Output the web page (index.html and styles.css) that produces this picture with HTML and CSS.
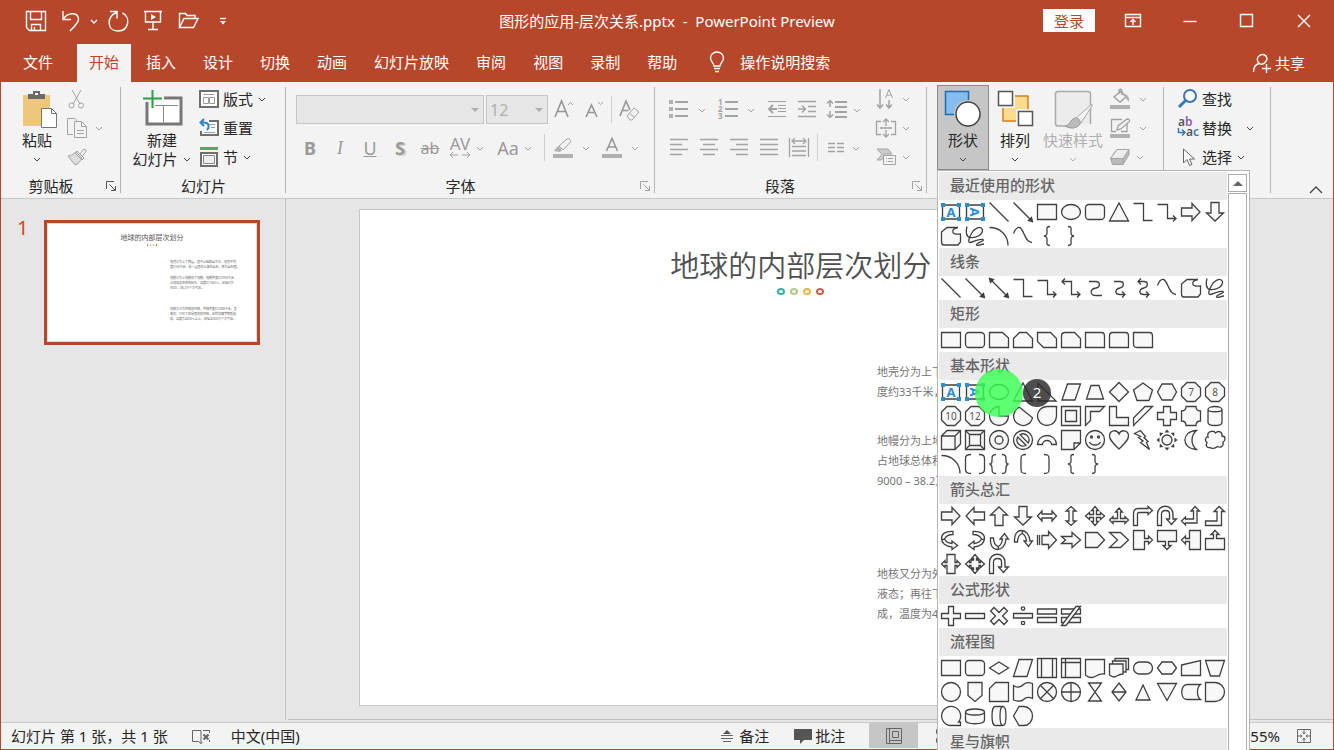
FILE: index.html
```html
<!DOCTYPE html>
<html lang="zh-CN">
<head>
<meta charset="utf-8">
<title>图形的应用-层次关系.pptx - PowerPoint Preview</title>
<link rel="stylesheet" href="styles.css">
</head>
<body>
<svg class="defs" aria-hidden="true">
  <symbol id="i-chev" viewBox="0 0 10 10"><path d="M2 4l3 3 3-3"/></symbol>
  <symbol id="i-launch" viewBox="0 0 12 12"><path d="M1.500 9V1.500H9M4.500 4.500l6 6M10.500 6v4.500H6"/></symbol>
</svg>
<div class="window">
  <header class="titlebar">
    <div class="quick">
      <button class="q" aria-label="保存"><svg width="22" height="22"><path d="M1.500 1.500h19v19h-16l-3-3zM5.500 1.500v8h11v-8M6.500 20.500v-6h9v6M9.500 17v3.500"/></svg></button>
      <button class="q" aria-label="撤消"><svg width="22" height="22"><path d="M3 1v8.500h8M3.500 9c4-7 14-7 15-.5.5 4-4 8-8.500 12.500"/></svg></button>
      <button class="q narrow" aria-label="撤消选项"><svg width="10" height="10"><use href="#i-chev"/></svg></button>
      <button class="q" aria-label="重复"><svg width="22" height="22"><path d="M3 1.500h7v7M9.500 2.500C-1 7 0 21 11 21c11 0 13-14 4.500-18"/></svg></button>
      <button class="q" aria-label="放映"><svg width="22" height="22"><path d="M2 1.500h18M3.500 1.500v10.500h15V1.500M11 12v7M6 19.500h10"/><path class="solid" d="M9 4l5 3-5 3z"/></svg></button>
      <button class="q" aria-label="打开"><svg width="22" height="22"><path d="M2.500 17.500v-14h6l1.500 2h8v3M2.500 17.500l4.500-9h14l-4.500 9z"/></svg></button>
      <button class="q" aria-label="自定义"><svg width="10" height="10"><path d="M2 2.500h6"/><path class="solid" d="M2 5h6L5 8.500z"/></svg></button>
    </div>
    <h1 class="doc">图形的应用-层次关系.pptx&nbsp; -&nbsp; PowerPoint Preview</h1>
    <div class="winctl">
      <button class="login">登录</button>
      <button class="w" aria-label="功能区显示选项"><svg width="18" height="16"><path d="M1.500 1.500h15v12h-15zM1.500 4.500h15M9 12V6.500M6.500 9L9 6.500 11.500 9"/></svg></button>
      <button class="w" aria-label="最小化"><svg width="16" height="16"><path d="M1.500 8.500h13"/></svg></button>
      <button class="w" aria-label="最大化"><svg width="16" height="16"><path d="M1.500 1.500h12v12h-12z"/></svg></button>
      <button class="w" aria-label="关闭"><svg width="16" height="16"><path d="M2 2l12 12M14 2L2 14"/></svg></button>
    </div>
  </header>

  <nav class="tabs">
    <button class="tab file">文件</button>
    <button class="tab active">开始</button>
    <button class="tab">插入</button>
    <button class="tab">设计</button>
    <button class="tab">切换</button>
    <button class="tab">动画</button>
    <button class="tab">幻灯片放映</button>
    <button class="tab">审阅</button>
    <button class="tab">视图</button>
    <button class="tab">录制</button>
    <button class="tab">帮助</button>
    <button class="tell"><svg width="16" height="22"><path d="M5 15c0-3-3.500-4-3.500-8a6.500 6 0 0 1 13 0c0 4-3.500 5-3.500 8zM5 17.500h6M6 20.500h4"/></svg>操作说明搜索</button>
    <button class="share"><svg width="20" height="20"><path d="M1.500 19c0-6 3-8 6-8.500M13 9.500c-2 2-4 2-5.500 1-3-2-3-6 0-8s7-1 7.500 3c0 2-1 3-2 4zM10 15.500h9M14.500 11v9"/></svg>共享</button>
  </nav>

  <section class="ribbon" aria-label="开始">
    <div class="group g-clip">
      <div class="tools">
        <button class="big paste"><svg width="40" height="40"><path d="M3 6h27v31H3z" fill="#eec77c"/><path d="M8 5h5V2h7v3h5v5H8z" fill="#6b6b6b"/><path d="M15 4h3v2h-3z" fill="#f3f3f3"/><path d="M21.500 19.500h10l5 5v14h-15z" fill="#fff" stroke="#777"/><path d="M31.500 19.500v5h5" fill="none" stroke="#777"/></svg><span>粘贴</span><svg class="chev" width="10" height="10"><use href="#i-chev"/></svg></button>
        <div class="stack dim">
          <button class="row tight" aria-label="剪切"><span class="ic"><svg width="20" height="22"><path d="M5 2l8 14M14 2L6 16M7 17.500a2.500 2.500 0 1 1-5 0 2.500 2.500 0 0 1 5 0zM16.500 17.500a2.500 2.500 0 1 1-5 0 2.500 2.500 0 0 1 5 0z"/></svg></span></button>
          <button class="row tight" aria-label="复制"><span class="ic"><svg width="22" height="22"><path d="M7 17.500H1.500v-16H9l2.500 3M8.500 4.500h7l5 5v11h-12zM15.500 4.500v5h5M11 13.500h7M11 16.500h7"/></svg></span><svg class="chev" width="10" height="10"><use href="#i-chev"/></svg></button>
          <button class="row tight" aria-label="格式刷"><span class="ic"><svg width="22" height="20"><path fill="#ddd" d="M2 9c4 0 6-3 8-4l6 6c-2 4-4 6-7 7z"/><path d="M9 6l7 7M11 4l7 7-2 2-7-7zM14 7l4-5 2.500 1.500-4 5.500"/></svg></span></button>
        </div>
      </div>
      <div class="caption"><span>剪贴板</span><button class="launch" aria-label="剪贴板设置"><svg width="12" height="12"><use href="#i-launch"/></svg></button></div>
    </div>

    <div class="group g-slides">
      <div class="tools">
        <button class="big newslide"><svg width="40" height="40"><path d="M5 9h34v26H5z" fill="#fff" stroke="#777" stroke-width="3"/><path d="M8 16.500h28M21.500 16.500V33" stroke="#888" fill="none"/><path d="M0 5h22v8H13v6H7V13H0z" fill="#f3f3f3"/><path d="M1 9.500h19M10.500 1v18" stroke="#2f9e4b" stroke-width="2" fill="none"/></svg><span>新建</span><span>幻灯片<svg class="chev" width="10" height="10"><use href="#i-chev"/></svg></span></button>
        <div class="stack">
          <button class="row"><span class="ic"><svg width="20" height="18"><path d="M1 1h18v16H1z" fill="#fff" stroke="#6e6e6e" stroke-width="2"/><path d="M4.500 4.500h11M4.500 7.500h5v6h-5zM10.500 7.500h5v6h-5z" stroke="#999" fill="none"/></svg></span>版式<svg class="chev" width="10" height="10"><use href="#i-chev"/></svg></button>
          <button class="row"><span class="ic"><svg width="20" height="20"><path d="M2 3h17v14H2z" fill="#fff" stroke="#6e6e6e" stroke-width="2"/><path d="M10 6.500h6M12 9.500h4M5 14.500h11" stroke="#999" fill="none"/><path d="M0 0h10v5l-1 8H0z" fill="#f3f3f3"/><path d="M5 1L1.500 4.500 5 8M1.500 4.500h4C10 5 11 9 8 12" stroke="#2787c9" stroke-width="2" fill="none"/></svg></span>重置</button>
          <button class="row"><span class="ic"><svg width="20" height="22"><path d="M1 1h18v3H1z" fill="#4aae63"/><path d="M2 7h16v13H2z" fill="#fff" stroke="#6e6e6e" stroke-width="2"/><path d="M4.500 9.500h11v8h-11z" fill="#eee" stroke="#888"/></svg></span>节<svg class="chev" width="10" height="10"><use href="#i-chev"/></svg></button>
        </div>
      </div>
      <div class="caption"><span>幻灯片</span></div>
    </div>

    <div class="group g-font">
      <div class="tools lines dim">
        <div class="line">
          <button class="combo name" aria-label="字体"><span></span><svg width="8" height="8"><path class="solid" d="M0 2h8L4 6z"/></svg></button>
          <button class="combo size" aria-label="字号"><span>12</span><svg width="8" height="8"><path class="solid" d="M0 2h8L4 6z"/></svg></button>
          <button class="t first" aria-label="增大字号"><svg width="22" height="22"><path class="letter" d="M2 18L8.500 2 15 18M4.500 12.500h8"/><path d="M15 6l2.500-2.500L20 6"/></svg></button>
          <button class="t" aria-label="减小字号"><svg width="22" height="22"><path class="letter" d="M3 18L8.500 6 14 18M5 13.500h7"/><path d="M15 3l2.500 2.500L20 3"/></svg></button>
          <i class="sep near"></i>
          <button class="t" aria-label="清除格式"><svg width="22" height="22"><path class="letter" d="M2 17L8 2l4 9M4.500 11.500h6"/><path d="M9 17l7-8 5 4-7 8h-2zM11 14l5 4"/></svg></button>
        </div>
        <div class="line">
          <button class="t"><b>B</b></button>
          <button class="t"><em>I</em></button>
          <button class="t"><u>U</u></button>
          <button class="t shadow"><b>S</b></button>
          <button class="t strike"><s>ab</s></button>
          <button class="t av"><span>AV</span><svg width="22" height="8"><path d="M4 1L1 4l3 3M1 4h8M18 1l3 3-3 3M21 4h-8"/></svg></button>
          <button class="d" aria-label="字符间距"><svg width="10" height="10"><use href="#i-chev"/></svg></button>
          <button class="t">Aa</button>
          <button class="d" aria-label="更改大小写"><svg width="10" height="10"><use href="#i-chev"/></svg></button>
          <i class="sep"></i>
          <button class="t" aria-label="突出显示"><svg width="22" height="22"><path class="solid" d="M1 17h20v4H1zM2 14l4-5 4 4-2 2z"/><path d="M7 9l8-7c2-1 5 1 3 3.500L11 13z"/></svg></button>
          <button class="d wide" aria-label="突出显示颜色"><svg width="10" height="10"><use href="#i-chev"/></svg></button>
          <button class="t" aria-label="字体颜色"><svg width="22" height="22"><path class="solid" d="M1 17h20v4H1z"/><path class="letter" d="M5.500 14L11 1.500 16.500 14M7.500 10h7"/></svg></button>
          <button class="d wide" aria-label="字体颜色选项"><svg width="10" height="10"><use href="#i-chev"/></svg></button>
        </div>
      </div>
      <div class="caption"><span>字体</span><button class="launch dim" aria-label="字体设置"><svg width="12" height="12"><use href="#i-launch"/></svg></button></div>
    </div>

    <div class="group g-para">
      <div class="tools dim">
        <div class="lines">
          <div class="line">
            <button class="t" aria-label="项目符号"><svg width="22" height="22"><path class="solid" d="M1 1h4v4H1zM1 8h4v4H1zM1 15h4v4H1z"/><path d="M7 3h13M7 10h13M7 17h13" stroke-width="2"/></svg></button>
            <button class="d wide" aria-label="项目符号选项"><svg width="10" height="10"><use href="#i-chev"/></svg></button>
            <button class="t" aria-label="编号"><svg width="22" height="22"><path d="M8 3h13M8 10h13M8 17h13" stroke-width="2"/><g class="digits"><text x="1" y="6">1</text><text x="1" y="13">2</text><text x="1" y="20">3</text></g></svg></button>
            <button class="d wide" aria-label="编号选项"><svg width="10" height="10"><use href="#i-chev"/></svg></button>
            <button class="t" aria-label="减少缩进"><svg width="22" height="22"><path d="M2 2.500h18M12 6.500h8M12 9.500h8M12 12.500h8M2 17.500h18" /><path d="M11 10H3M7 6l-4 4 4 4" stroke-width="2"/></svg></button>
            <button class="t" aria-label="增加缩进"><svg width="22" height="22"><path d="M2 2.500h18M12 7.500h8M12 12.500h8M2 17.500h18M2 10h7M6 6.500L9.500 10 6 13.500" stroke-width="1.500"/></svg></button>
            <button class="t" aria-label="行距"><svg width="22" height="22"><path d="M9 3h12M9 8h12M9 13h12M9 18h12" stroke-width="2"/><path d="M4 2v6M1 4.500L4 1.500l3 3M4 12v6M1 15.500l3 3 3-3" stroke-width="1.500"/></svg></button>
            <button class="d" aria-label="行距选项"><svg width="10" height="10"><use href="#i-chev"/></svg></button>
          </div>
          <div class="line">
            <button class="t" aria-label="左对齐"><svg width="22" height="22"><path d="M2 2.500h18M2 7.500h12M2 12.500h18M2 17.500h12" stroke-width="1.500"/></svg></button>
            <button class="t" aria-label="居中"><svg width="22" height="22"><path d="M2 2.500h18M5 7.500h12M2 12.500h18M5 17.500h12" stroke-width="1.500"/></svg></button>
            <button class="t" aria-label="右对齐"><svg width="22" height="22"><path d="M2 2.500h18M8 7.500h12M2 12.500h18M8 17.500h12" stroke-width="1.500"/></svg></button>
            <button class="t" aria-label="两端对齐"><svg width="22" height="22"><path d="M2 2.500h18M2 7.500h18M2 12.500h18M2 17.500h18" stroke-width="1.500"/></svg></button>
            <button class="t" aria-label="分散对齐"><svg width="22" height="22"><path d="M1.500 1v19M20.500 1v19M4 9.500h14M4 14h14M4 18.500h14M4 4h14M7 1L4 4l3 3M15 1l3 3-3 3" stroke-width="1.300"/></svg></button>
            <i class="sep"></i>
            <button class="t" aria-label="分栏"><svg width="22" height="22"><path d="M3 6.500h7M12 6.500h7M3 10.500h7M12 10.500h7M3 14.500h7M12 14.500h7" stroke-width="1.500"/></svg></button>
            <button class="d" aria-label="分栏选项"><svg width="10" height="10"><use href="#i-chev"/></svg></button>
          </div>
        </div>
        <div class="stack">
          <button class="row slim" aria-label="文字方向"><span class="ic"><svg width="22" height="22"><path d="M5 1v19M2 16.500l3 3.500 3-3.500M14 12v8M11 16.500l3 3.500 3-3.500" stroke-width="1.500"/><path d="M10.500 10L14 1.500 17.500 10M12 7h4"/></svg></span><svg class="chev" width="10" height="10"><use href="#i-chev"/></svg></button>
          <button class="row slim" aria-label="对齐文本"><span class="ic"><svg width="22" height="22"><path d="M6 4.500H1.500v13H6M16 4.500h4.500v13H16M5 11h12M11 2v7M8 5l3-3 3 3M11 13v7M8 17l3 3 3-3" stroke-width="1.300"/></svg></span><svg class="chev" width="10" height="10"><use href="#i-chev"/></svg></button>
          <button class="row slim" aria-label="转换为 SmartArt"><span class="ic"><svg width="22" height="22"><path d="M2 3h11l4 5H9v4l-3 2H2l5-5.500z" fill="#ccc"/><path d="M8.500 9.500h12v9h-12zM11 12.500h1M13 12.500h5M11 15.500h1M13 15.500h5" fill="#f3f3f3"/></svg></span><svg class="chev" width="10" height="10"><use href="#i-chev"/></svg></button>
        </div>
      </div>
      <div class="caption"><span>段落</span><button class="launch dim" aria-label="段落设置"><svg width="12" height="12"><use href="#i-launch"/></svg></button></div>
    </div>

    <div class="group g-draw" aria-label="绘图">
      <div class="tools">
        <div class="anchor">
          <button class="big open" aria-expanded="true"><svg width="40" height="40"><path d="M2.500 2.500h23v23h-23z" fill="#85bdee" stroke="#1a6fb8" stroke-width="1.500"/><circle cx="25" cy="25" r="14" fill="#c6c6c6"/><circle cx="25" cy="25" r="12" fill="#fff" stroke="#444" stroke-width="1.500"/></svg><span>形状</span><svg class="chev" width="10" height="10"><use href="#i-chev"/></svg></button>
          <div class="menu">
            <div class="gallery">
              <h2>最近使用的形状</h2>
              <div class="grid" data-shapes="textbox vtextbox line arrow rect ellipse round tri elbow elbowArrow right down freeform scribble arc curve lbrace rbrace"></div>
              <h2>线条</h2>
              <div class="grid" data-shapes="line arrow arrow2 elbow elbowArrow elbowArrow2 curved curvedArrow curvedArrow2 curve freeform scribble"></div>
              <h2>矩形</h2>
              <div class="grid" data-shapes="rect round snip1 snip2 snipDiag snipRound round1 round2 roundDiag"></div>
              <h2>基本形状</h2>
              <div class="grid" data-shapes="textbox vtextbox ellipse tri rtri para trap diamond pentagon hexagon n7 n8 n10 n12 pie chord tear frame halfFrame corner stripe cross plaque can cube bevel donut no blockArc folded smiley heart bolt sun moon cloud arc bracketPair bracePair lbracket rbracket lbrace rbrace"></div>
              <h2>箭头总汇</h2>
              <div class="grid" data-shapes="right left up down leftRight upDown quad triArrow bent uturn leftUp bentUp curveRight curveLeft curveUp curveDown striped notched home chevron callRight callDown callLeft callUp callLeftRight callQuad circular"></div>
              <h2>公式形状</h2>
              <div class="grid" data-shapes="mathPlus minus times divide equal notEqual"></div>
              <h2>流程图</h2>
              <div class="grid" data-shapes="rect round decision data predefined internal document documents terminator prep manualInput manualOp circle offPage card tape junction or collate sort extract merge stored delay sequential disk direct display"></div>
              <h2>星与旗帜</h2>
            </div>
            <div class="scroll"><button aria-label="向上滚动"><svg width="10" height="8"><path d="M0 7h10L5 2z"/></svg></button><div class="thumb"></div></div>
            <div class="tap"></div>
            <div class="step">2</div>
          </div>
        </div>
        <button class="big arrange"><svg width="40" height="40"><path d="M7 7h25v25H7z" fill="#f9dc8f" stroke="#e07b1a" stroke-width="1.500"/><path d="M0 0h19v19H0zM20 20h20v20H20z" fill="#f3f3f3"/><path d="M2.500 2.500h14v14h-14zM22.500 22.500h14v14h-14z" fill="#fff" stroke="#555" stroke-width="1.500"/></svg><span>排列</span><svg class="chev" width="10" height="10"><use href="#i-chev"/></svg></button>
        <button class="big faded"><svg width="40" height="40"><path d="M24 37H5q-2.500 0-2.500-2.500V5q0-2.500 2.500-2.500h30q2.500 0 2.500 2.500v30" fill="#ececec" stroke="#aaa" stroke-width="1.500"/><path d="M39 15L23 29l5 5 11-17z" fill="#f3f3f3" stroke="#aaa"/><path d="M12 37c5 0 5-7 10-8 4 0 6 3 5 6-3 5-10 5-15 2z" fill="#bbb" stroke="#999"/></svg><span>快速样式</span><svg class="chev" width="10" height="10"><use href="#i-chev"/></svg></button>
        <div class="stack dim">
          <button class="row wide" aria-label="形状填充"><span class="ic"><svg width="22" height="22"><path class="solid" d="M1 17h20v4H1z"/><path d="M5 9l7-6 5 6-6 5zM10 6V2q2-2 3 1v4" stroke-width="1.500"/><path class="solid" d="M16 6q5 2 4 8l-4-5z"/></svg></span><svg class="chev" width="10" height="10"><use href="#i-chev"/></svg></button>
          <button class="row wide" aria-label="形状轮廓"><span class="ic"><svg width="22" height="22"><path class="solid" d="M1 17h20v4H1z"/><path d="M13 2.500H2.500v12H7M18 6v8.500h-6M8 13l1-4 9-7q3 0 2.500 2.500L12 12z" stroke-width="1.300"/></svg></span><svg class="chev" width="10" height="10"><use href="#i-chev"/></svg></button>
          <button class="row" aria-label="形状效果"><span class="ic"><svg width="22" height="22"><path fill="#bbb" d="M1.500 12.500L8 3.500h12v5L14 18.500H3.500z"/><path fill="#eee" d="M1.500 12.500L8 3.500h12L14 12.500z"/><path d="M14 12.500v6"/></svg></span><svg class="chev" width="10" height="10"><use href="#i-chev"/></svg></button>
        </div>
      </div>
    </div>

    <div class="group g-edit" aria-label="编辑">
      <div class="tools">
        <div class="stack">
          <button class="row"><span class="ic"><svg width="22" height="20"><circle cx="13" cy="7" r="6" fill="#fff" stroke="#3a76b5" stroke-width="2"/><path d="M8.500 11.500L2 18" stroke="#3a76b5" stroke-width="3" fill="none"/></svg></span>查找</button>
          <button class="row"><span class="ic"><svg class="replace" width="22" height="22"><text x="1" y="9">a<tspan fill="#8e5ba8">b</tspan></text><text x="9" y="19">a<tspan fill="#3a76b5">c</tspan></text><path d="M1.500 11v4.500h6M5 12.500l3 3-3 3" fill="none" stroke="#3a76b5" stroke-width="1.500"/></svg></span>替换<svg class="chev far" width="10" height="10"><use href="#i-chev"/></svg></button>
          <button class="row"><span class="ic"><svg width="20" height="20"><path d="M5.500 2v14l3.500-3.500 2.500 6 2.500-1-2.500-5.500h5z" fill="#fff" stroke="#666"/></svg></span>选择<svg class="chev" width="10" height="10"><use href="#i-chev"/></svg></button>
        </div>
      </div>
    </div>
    <button class="collapse" aria-label="折叠功能区"><svg width="16" height="10"><path d="M2 8l6-6 6 6"/></svg></button>
  </section>

  <main class="work">
    <aside class="pane">
      <span class="num">1</span>
      <div class="mini">
        <p class="mini-title">地球的内部层次划分</p>
        <div class="mini-dots"><i></i><i></i><i></i><i></i></div>
        <div class="mini-text">
          <p>地壳分为上下两层，其中以硅酸岩为主，地壳平均<br>度约33千米，是一层固态土壤和岩石，称为岩石圈。</p>
          <p>地幔分为上地幔和下地幔，地幔厚度约2900千米，<br>占地球总体积的83%，温度约1000℃，压强约为<br>9000 – 38.2万个大气压。</p>
          <p>地核又分为外核和内核，外核厚度约2080千米，呈<br>液态；再往下就是固态的内核，由铁和镍等物质组<br>成，温度为4000℃以上，压强达300万个大气压。</p>
        </div>
      </div>
    </aside>
    <div class="stage">
      <article class="slide">
        <h2 class="slide-title">地球的内部层次划分</h2>
        <div class="dots"><i></i><i></i><i></i><i></i></div>
        <div class="copy">
          <p>地壳分为上下两层，其中以硅酸岩为主，地壳平均<br>度约33千米，是一层固态土壤和岩石，称为岩石圈。</p>
          <p>地幔分为上地幔和下地幔，地幔厚度约2900千米，<br>占地球总体积的83%，温度约1000℃，压强约为<br>9000 – 38.2万个大气压。</p>
          <p>地核又分为外核和内核，外核厚度约2080千米，呈<br>液态；再往下就是固态的内核，由铁和镍等物质组<br>成，温度为4000℃以上，压强达300万个大气压。</p>
        </div>
      </article>
    </div>
  </main>

  <footer class="status">
    <span>幻灯片 第 1 张，共 1 张</span>
    <button aria-label="拼写检查"><svg width="20" height="18"><path d="M10 3.500H1.500v11h6l2.500 2 1.500-1M10 3.500v13M12 3.500h6.500V6M18.500 13v2"/><path d="M12.500 7.500l5 5M17.500 7.500l-5 5" stroke-width="2"/></svg></button>
    <button class="lang">中文(中国)</button>
    <div class="right">
      <button class="notes"><svg width="14" height="14"><path d="M1 6.500h12M1 9.500h12M3 12.500h8"/><path d="M3 5l4-4 4 4z" fill="#555" stroke="none"/></svg>备注</button>
      <button class="comments"><svg width="20" height="18"><path d="M1 2h18v11h-8l-4 4v-4H1z" fill="#555" stroke="none"/></svg>批注</button>
      <button class="view on" aria-label="普通视图"><svg width="18" height="18"><path d="M1.500 1.500h15v15h-15zM4.500 1.500v15M7.500 4.500h6v6h-6zM4.500 13.500h12"/></svg></button>
      <button class="view" aria-label="幻灯片浏览"><svg width="18" height="18"><path d="M2.500 2.500h5v4h-5zM10.500 2.500h5v4h-5zM2.500 11.500h5v4h-5zM10.500 11.500h5v4h-5z"/></svg></button>
      <input class="zoom" type="range" value="30" aria-label="缩放">
      <span>55%</span>
      <button aria-label="适应窗口"><svg width="16" height="16"><path d="M1.500 1.500h13v13h-13zM8 2v4M8 10v4M2 8h4M10 8h4M6.500 4.500L8 6l1.500-1.500M6.500 11.500L8 10l1.500 1.500M4.500 6.500L6 8 4.500 9.500M11.500 6.500L10 8l1.500 1.500"/></svg></button>
    </div>
  </footer>
</div>
<script src="shapes.js"></script>
</body>
</html>
```

FILE: styles.css
```css
* { box-sizing: border-box; }
body {
  margin: 0;
  overflow: hidden;
  font: 15px/20px "Noto Sans", "Noto Sans CJK SC", sans-serif;
  color: #262626;
}
button {
  font: inherit;
  color: inherit;
  background: none;
  border: 0;
  padding: 0;
  display: flex;
  align-items: center;
  justify-content: center;
}
h1, h2, p { margin: 0; font-weight: 400; }
svg { flex: none; overflow: visible; }
.defs { position: absolute; width: 0; height: 0; }

.window {
  display: flex;
  flex-direction: column;
  height: 100vh;
  border: 1px solid #b7472a;
  border-top: 0;
  background: #e6e6e6;
}

/* title bar */
.titlebar {
  display: grid;
  grid-template-columns: 1fr auto 1fr;
  align-items: center;
  height: 44px;
  padding-bottom: 2px;
  background: #b7472a;
  color: #fff;
}
.titlebar svg, .tabs svg { fill: none; stroke: #fff; stroke-width: 1.400; }
.titlebar .solid { fill: #fff; stroke: none; }
.quick { display: flex; align-items: center; padding: 0 0 1px 17px; }
.q { width: 35px; height: 36px; }
.q.narrow { width: 12px; }
.doc { font-size: 15px; line-height: 20px; }
.winctl { display: flex; align-items: center; justify-content: flex-end; padding: 0 1px 1px 0; }
.login {
  width: 52px;
  height: 23px;
  background: #fff;
  color: #b7472a;
}
.w { width: 57px; height: 40px; }
.login + .w { margin-left: 9px; }

/* tabs */
.tabs {
  display: flex;
  gap: 3px;
  height: 38px;
  padding-left: 10px;
  background: #b7472a;
  color: #fff;
}
.tab { padding: 0 12px 2px; }
.tab.file { margin-right: 9px; }
.tab.active { background: #f3f3f3; color: #b7472a; }
.tell { gap: 15px; margin-left: 17px; padding-bottom: 2px; }
.share { gap: 3px; margin-left: auto; padding-right: 28px; }

/* ribbon */
.ribbon {
  display: flex;
  height: 117px;
  padding-top: 3px;
  background: #f3f3f3;
  border-bottom: 1px solid #c8c8c8;
}
.ribbon svg { fill: none; stroke: none; }
.group {
  display: flex;
  flex-direction: column;
  flex: none;
  position: relative;
  height: 110px;
}
.group::after {
  content: "";
  position: absolute;
  right: 0;
  top: 2px;
  bottom: 2px;
  width: 1px;
  background: #b4b4b4;
}
.g-clip { width: 120px; }
.g-slides { width: 165px; }
.g-font { width: 369px; }
.g-para { width: 272px; }
.g-draw { width: 237px; }
.g-edit { width: 107px; }
.tools { display: flex; height: 88px; }
.caption { display: flex; justify-content: center; position: relative; padding-top: 4px; height: 22px; line-height: 20px; }
.caption span { line-height: 18px; }
.g-clip .caption { padding-right: 20px; }
.g-para .caption { padding-right: 22px; }
.g-font .caption { padding-right: 20px; }
.launch { position: absolute; right: 4px; top: 7px; }
.launch svg { stroke: #555; }
.launch.dim svg { stroke: #aaa; }

.big {
  flex-direction: column;
  justify-content: flex-start;
  width: 52px;
  height: 85px;
  padding-top: 3px;
  border: 1px solid transparent;
}
.big > span { padding-top: 1px; }
.big .chev { margin-top: 4px; }
.big span { display: flex; align-items: center; white-space: nowrap; }
.ribbon .chev { stroke: #444; }
.ribbon .chev path { fill: none; }
.big.open { background: #c6c6c6; border-color: #8a8a8a; }
.big.faded { width: 64px; color: #b0b0b0; }
.ribbon .faded .chev { stroke: #b0b0b0; }
.paste { margin-left: 11px; width: 50px; }
.paste > svg:first-child { margin-left: 5px; }
.newslide { margin-left: 8px; width: 66px; }
.newslide span + span { padding: 0; line-height: 18px; }
.big.newslide .chev { margin: 0 0 0 4px; }

.stack { display: flex; flex-direction: column; }
.row { height: 29px; justify-content: flex-start; padding-bottom: 2px; }
.ic { display: flex; justify-content: center; width: 30px; }
.row .chev { margin-left: 4px; }
.g-slides .ic { width: 28px; justify-content: flex-start; padding-left: 4px; }
.g-edit .ic { width: 28px; }
.g-edit .stack { padding-left: 10px; }
.row .chev.far { margin-left: 13px; }
.row.slim .chev { margin-left: 0; }
.row.wide .chev { margin-left: 3px; }
.row.tight .chev { margin-left: 2px; }
.dim .row:not(.wide):not(.slim):not(.tight) .chev { margin-left: 0; }

.dim { color: #9a9a9a; }
.ribbon .dim svg { stroke: #a3a3a3; }
.ribbon .dim .solid { fill: #b0b0b0; stroke: none; }
.ribbon .dim .letter { stroke: #979797; stroke-width: 1.600; }
.lines { display: flex; flex-direction: column; padding-top: 5px; }
.g-font .lines { padding-left: 9px; }
.g-para .tools { padding-left: 9px; }
.g-para .lines { width: 207px; }
.g-draw .tools { padding-left: 10px; }
.line { display: flex; align-items: center; height: 39px; }
.line + .line { height: 37px; }
.combo {
  justify-content: space-between;
  height: 29px;
  padding: 0 4px 0 3px;
  background: #e6e6e6;
  border: 1px solid #c6c6c6;
  color: #b0b0b0;
}
.combo.name { width: 188px; margin: 0 2px 0 1px; }
.combo.size { width: 62px; }
.combo.size span { font-size: 16px; }
.t { width: 30px; height: 30px; font-size: 18px; }
.t.first { margin-left: 1px; }
.line em { font-family: "Liberation Serif", serif; }
.shadow b { text-shadow: 2px 1px 1px #ccc; }
.strike { font-size: 16px; }
.av { flex-direction: column; line-height: 15px; font-size: 17px; }
.d { width: 10px; height: 30px; margin-right: 8px; }
.d.wide { width: 16px; margin-right: 3px; }
.sep { width: 1px; height: 27px; margin: 0 3px; background: #cfcfcf; }
.sep.near { margin: 0 2px; }
.digits { font-size: 8px; font-weight: 700; fill: #a3a3a3; stroke: none; }
.replace { font-size: 12px; font-weight: 600; }
.ribbon .replace { fill: #555; }
.collapse { margin: auto 9px 3px auto; }
.collapse svg { stroke: #444; stroke-width: 1.300; }
.arrange > svg:first-child { margin-left: 2px; }

/* shape menu */
.anchor { position: relative; }
.menu {
  position: absolute;
  z-index: 2;
  left: 0;
  top: 85px;
  display: flex;
  width: 313px;
  height: calc(100vh - 170px);
  padding: 1px 2px 0 1px;
  overflow: hidden;
  background: #fff;
  border: 1px solid #b4b4b4;
  border-bottom: 0;
}
.gallery { width: 288px; }
.gallery h2 {
  height: 28px;
  padding-left: 11px;
  background: #eaeaea;
  color: #666;
  font-size: 15px;
  line-height: 27px;
  font-weight: 500;
}
.grid { display: grid; grid-template-columns: repeat(12, 24px); grid-auto-rows: 24px; }
.ribbon .grid svg { fill: #f8f8f8; stroke: #404040; stroke-width: 1.300; }
.grid .open-path { fill: none; }
.grid .tip { fill: #404040; }
.grid .ray { fill: #404040; stroke: none; }
.grid .blue { fill: #2b8fd3; stroke: none; }
.grid text { stroke: none; fill: #555; font-size: 10px; line-height: 12px; text-anchor: middle; }
.grid text.blue { fill: #2b8fd3; font-size: 13px; font-weight: 700; }
.scroll {
  display: flex;
  flex-direction: column;
  gap: 1px;
  width: 19px;
  margin: 2px 0 0 1px;
}
.scroll button { height: 18px; border: 1px solid #ababab; }
.ribbon .scroll svg { fill: #666; }
.thumb { flex: 1; border: 1px solid #ababab; border-bottom: 0; }
.tap, .step { position: absolute; border-radius: 50%; pointer-events: none; }
.tap { left: 37px; top: 198px; width: 48px; height: 48px; background: rgba(55, 255, 80, 0.800); }
.step {
  left: 85px;
  top: 208px;
  width: 28px;
  height: 28px;
  background: rgba(40, 40, 40, 0.820);
  color: #fff;
  font-size: 15px;
  line-height: 27px;
  text-align: center;
}

/* work area */
.work { display: flex; flex: 1; min-height: 0; padding-bottom: 2px; }
.pane {
  display: flex;
  align-items: flex-start;
  width: 285px;
  padding: 21px 0 0 16px;
  border-right: 1px solid #c0c0c0;
}
.num { width: 27px; color: #d24726; font-size: 20px; line-height: 16px; }
.mini {
  width: 216px;
  height: 125px;
  padding-top: 11px;
  border: 3px solid #b7472a;
  background: #fff;
  color: #555;
  outline: 1px solid #ddd;
  outline-offset: -4px;
}
.mini-title { font-size: 7px; line-height: 7px; text-align: center; }
.mini-dots { display: flex; justify-content: center; gap: 2px; padding-top: 3px; }
.mini-dots i { width: 1px; height: 2px; background: #f0c070; }
.mini-dots i:first-child { background: #3cb5a0; }
.mini-dots i:last-child { background: #d0604f; }
.mini-text { padding: 14px 0 0 123px; font-size: 3px; line-height: 5px; color: #666; white-space: nowrap; }
.mini-text p { margin-bottom: 6px; }
.mini-text p + p { margin-bottom: 16px; }
.stage {
  flex: 1;
  min-width: 0;
  margin-left: 2px;
  padding: 10px 0 13px 71px;
  border-bottom: 1px solid #c0c0c0;
}
.slide {
  height: 100%;
  aspect-ratio: 16 / 9;
  padding-top: 36px;
  background: #fff;
  border: 1px solid #c6c6c6;
}
.slide-title { font-size: 29px; line-height: 40px; font-weight: 350; color: #505050; text-align: center; }
.dots { display: flex; justify-content: center; gap: 5px; padding-top: 2px; }
.dots i { width: 8px; height: 7px; border: 2px solid #34b3a0; border-radius: 50%; }
.dots i:nth-child(2) { border-color: #b5c98a; }
.dots i:nth-child(3) { border-color: #f2b443; }
.dots i:nth-child(4) { border-color: #cf5d50; }
.copy { padding: 67px 0 0 517px; font-size: 11px; line-height: 20px; color: #757575; white-space: nowrap; }
.copy p { margin-bottom: 29px; }
.copy p + p { margin-bottom: 73px; }

/* status bar */
.status {
  display: flex;
  align-items: center;
  height: 27px;
  padding: 0 0 1px 10px;
  background: #f3f3f3;
  border-top: 1px solid #c8c8c8;
}
.status svg { fill: none; stroke: #666; }
.status > button { margin-left: 23px; }
.status .lang { margin-left: 20px; }
.right { display: flex; align-items: center; margin-left: auto; padding-right: 21px; height: 100%; }
.notes { gap: 5px; margin-right: 24px; }
.comments { gap: 2px; margin-right: 24px; }
.view { width: 49px; height: 100%; }
.view.on { background: #c6c6c6; }
.zoom { width: 250px; margin: 0 33px 0 0; }
.right > span { margin-right: 16px; }
```

FILE: shapes.js
```js
// Each entry is the SVG content of one 24 x 24 gallery cell.
const p = (d, cls) => `<path d="${d}"${cls ? ` class="${cls}"` : ''}/>`;
const line = d => p(d, 'open-path');
const tip = d => p(d, 'tip');
const turn = (deg, s) => `<g transform="rotate(${deg} 12 12)">${s}</g>`;
const flip = s => `<g transform="matrix(-1 0 0 1 24 0)">${s}</g>`;
const flipV = s => `<g transform="matrix(1 0 0 -1 0 24)">${s}</g>`;
const circle = (r, cx = 12, cy = 12) => `<circle cx="${cx}" cy="${cy}" r="${r}"/>`;

const octagon = n => p('M8 2.5h8l5.500 5.500v8l-5.500 5.500h-8l-5.500-5.500v-8z') + `<text x="12" y="16">${n}</text>`;
const handles = '<path class="blue" d="M2 3h4v4H2zM18 3h4v4h-4zM2 17h4v4H2zM18 17h4v4h-4z"/>';
const letterBox = deg => p('M3.500 5h17v14h-17z') + handles + turn(deg, '<text class="blue" x="12" y="17">A</text>');
const arrowR = p('M2.500 8h10.500v-4.500l8 8.500-8 8.500v-4.500h-10.500z');
const leftRight = p('M2.500 12l4.500-5v3h10v-3l4.500 5-4.500 5v-3h-10v3z');
const square = p('M2.500 2.500h19v19h-19z');
const lbrace = line('M15 2.500c-4 0-3 2-3 5s0 4-3 4.500c3 .5 3 2 3 4.500s-1 5 3 5');
const lbracket = line('M15 2.500c-4 0-5 1-5 4v11c0 3 1 4 5 4');
const pairBracket = line('M8 2.500c-4 0-5.500 1-5.500 4v11c0 3 1.500 4 5.500 4');
const pairBrace = line('M9 2.500c-4 0-4 2-4 5s0 4-2.500 4.500c2.500.5 2.500 2 2.500 4.500s0 5 4 5');
const callR = p('M2.500 2.500h11v8h4v-2.500l4 4-4 4v-2.500h-4v8h-11z');
const curveR = p('M14 3.500c-8-.5-11.500 2.500-11.500 7s4 8 10.500 8.500v2.500l5.500-4-5.500-4.500v2.500c-4-.5-6.500-2-7.500-4.500 1.500-3 4.500-4.500 8.500-4.500z') + line('M2.500 10.500c.5 1 1.500 1.500 3 .5');
const mathPlus = p('M9.500 2.500h5v7h7v5h-7v7h-5v-7h-7v-5h7z');
const uturn = p('M2.500 21.500v-11.500a7.500 7.500 0 0 1 15.500 0v5h3.500l-5 5.500-5-5.500h3v-5q0-3.500-4-3.500t-4 3.500v11.500z');
const curvedLine = 'M6 5.500h7c4.500 0 4.500 5.500 0 6.500-6 1-7 7.500 0 7.500h6';
const curvedTall = 'M7 5.500h6c4.500 0 4.500 5 0 6.500-5 1-6 6.500 0 6.500h5';
const sunRays = [0, 45, 90, 135, 180, 225, 270, 315].map(a => turn(a, p('M9.500 4.500l2.500-3 2.500 3z', 'ray'))).join('');

const shapes = {
  textbox: letterBox(0),
  vtextbox: letterBox(90),
  line: line('M2.500 2.500l19 19'),
  arrow: line('M2.500 2.500l18 18') + tip('M21.500 21.500l-4-1 3-3z'),
  arrow2: line('M3 3l18 18') + tip('M21.500 21.500l-4-1 3-3zM2.500 2.500l4 1-3 3z'),
  elbow: line('M2.500 3.500h10v17h9'),
  elbowArrow: line('M2.500 4.500h10v14h9M18 15.500l3 3-3 3'),
  elbowArrow2: line('M3 5.500h9.500v13h9M18 15.500l3 3-3 3M6 2.500l-3 3 3 3'),
  curved: line(curvedLine),
  curvedArrow: line(curvedTall + 'M15 15.500l3 3-3 3'),
  curvedArrow2: line(curvedTall + 'M15 15.500l3 3-3 3M10 2.500l-3 3 3 3'),
  curve: line('M2.500 9.500c1.500-4 3.500-6.500 6-6 4.500 1 5 15 12.500 15'),
  freeform: p('M2.500 18v-10l5.500-4.500h11c-4 1-6 2-5 5 1 2 3.500 2 7.500 1.500v8l-2.500 3h-14c-2 0-2.500-1-2.500-3z'),
  scribble: line('M4 2.500c-1.500 5-1 10 3 11 6 1 13-3 12.500-8-2-4.500-8-1-11 4-2 4-4.500 9-1 9 4-1 8-4 12.500-3 2 2-7.500 3-6.500 5.500 2 1.500 4-1 7.500-1'),
  arc: line('M2.500 3.500c11 0 18.500 8 18.500 18'),
  lbrace, rbrace: flip(lbrace),
  lbracket, rbracket: flip(lbracket),
  bracketPair: pairBracket + flip(pairBracket),
  bracePair: pairBrace + flip(pairBrace),
  rect: p('M2.500 4.500h19v15h-19z'),
  round: '<rect x="2.500" y="4.500" width="19" height="15" rx="3.500"/>',
  snip1: p('M2.500 4.500h13l6 5.500v9.500h-19z'),
  snip2: p('M2.500 19.500v-9l6-6h7l6 6v9z'),
  snipDiag: p('M2.500 4.500h13l6 6v9h-13l-6-6z'),
  snipRound: p('M2.500 19.500v-11.500q0-3.500 3.500-3.500h9.500l6 6v9z'),
  round1: p('M2.500 4.500h15.500q3.500 0 3.500 3.500v11.500h-19z'),
  round2: p('M2.500 19.500v-11.500q0-3.500 3.500-3.500h12q3.500 0 3.500 3.500v11.500z'),
  roundDiag: p('M2.500 4.500h15.500q3.500 0 3.500 3.500v11.500h-15.500q-3.500 0-3.500-3.500z'),
  ellipse: '<ellipse cx="12" cy="12" rx="9.500" ry="7.500"/>',
  circle: circle(9.5),
  tri: p('M12 3l9.500 18h-19z'),
  rtri: p('M3 3v18h18z'),
  para: p('M8.500 4h13l-5.500 16h-13z'),
  trap: p('M8 5.500h8l4.500 13.500h-17z'),
  diamond: p('M12 2.500l9.500 9.500-9.500 9.500-9.500-9.500z'),
  pentagon: p('M12 3l9.500 7-3.500 10.500h-12l-3.500-10.500z'),
  hexagon: p('M7 4h10l4.500 8-4.500 8h-10l-4.500-8z'),
  n7: octagon(7), n8: octagon(8), n10: octagon(10), n12: octagon(12),
  pie: p('M12 12h9.500a9.500 9.500 0 1 1-9.500-9.500z'),
  chord: p('M8.500 3.200l13 10.500a9.500 9.500 0 1 1-13-10.500z'),
  tear: p('M21.500 2.500v9.500a9.500 9.500 0 1 1-9.500-9.500z'),
  frame: square + p('M6.500 6.500h11v11h-11z'),
  halfFrame: p('M2.500 2.500h19l-5 5h-9v9l-5 5z'),
  corner: p('M2.500 2.500h7v11h12v8h-19z'),
  stripe: p('M14 2.500h7.500l-19 19v-7.500z'),
  cross: p('M8.500 2.500h7v6h6v7h-6v6h-7v-6h-6v-7h6z'),
  plaque: p('M7 2.500h10q0 4.500 4.500 4.500v10q-4.500 0-4.500 4.500h-10q0-4.500-4.500-4.500v-10q4.500 0 4.500-4.500z'),
  can: p('M5 5.500v13c0 4 14 4 14 0v-13c0-4-14-4-14 0c0 3 14 3 14 0'),
  cube: p('M2.500 8l5.500-5.500h13.500v13.500l-5.500 5.500h-13.500zM2.500 8h13.500v13.500M16 8l5.500-5.500'),
  bevel: square + p('M6.500 6.500h11v11h-11zM2.500 2.500l4 4M21.500 2.500l-4 4M2.500 21.500l4-4M21.500 21.500l-4-4'),
  donut: circle(9.5) + circle(4),
  no: circle(9.5) + p('M9 6.700a6 6 0 0 1 8.200 8.200zM6.800 9a6 6 0 0 0 8.200 8.200z'),
  blockArc: p('M2.500 16.500a9.500 9 0 0 1 19 0h-5a4.500 4 0 0 0-9 0z'),
  folded: p('M2.500 2.500h19v12.500l-6.500 6.500h-12.500zM21.500 15h-6.500v6.500'),
  smiley: circle(9.5) + circle(1, 8.5, 9) + circle(1, 15.5, 9) + line('M6.500 14c2 4 9 4 11 0'),
  heart: p('M12 21c-6-6-9.500-9-9.500-13 0-6 7.500-7 9.500-2 2-5 9.500-4 9.500 2 0 4-3.500 7-9.500 13z'),
  bolt: p('M3.500 5.500l6-3 5 6-1.500 1 4 4-1.500 1 3 7-9-7 2.500-1.500-4.500-3.500 2-1z'),
  sun: circle(5) + sunRays,
  moon: p('M17.500 2.500c-15.500.5-15.500 18.500 0 19-6-5-6-14 0-19z'),
  cloud: p('M7 19.500c-3.500 1-4.500-2.500-3-5-3-2-1-6 1-5.500-2-6 6-7 7.500-4 3-3 7-1 6.500 3 4 0 3.500 5 1 6 1 5-3 6-5.500 4.500-2 2-6 2.500-7.500 1z'),
  right: arrowR, left: turn(180, arrowR), up: turn(270, arrowR), down: turn(90, arrowR),
  leftRight, upDown: turn(90, leftRight),
  quad: p('M12 2.500l3.500 4h-2v4h4v-2l4 3.500-4 3.500v-2h-4v4h2l-3.500 4-3.500-4h2v-4h-4v2l-4-3.500 4-3.500v2h4v-4h-2z'),
  triArrow: p('M12 4l3.500 4h-2v6.500h4.500v-2l3.500 3.500-3.500 3.500v-2h-12v2l-3.500-3.500 3.500-3.500v2h4.500v-6.500h-2z'),
  bent: p('M2.500 21.500v-12q0-5 5-5h9.500v-2l4.500 4-4.500 4v-2h-9q-1.500 0-1.500 1.500v11.500z'),
  uturn, circular: uturn,
  leftUp: p('M2.500 17l4-4v2h8v-8h-2.500l4-4.500 4.500 4.500h-2.500v12h-11.500v2z'),
  bentUp: p('M2.500 17h11.500v-9.500h-3l5-5 5.500 5h-3v14h-16z'),
  curveRight: curveR, curveLeft: flip(curveR), curveUp: turn(270, curveR), curveDown: turn(90, flipV(curveR)),
  striped: line('M2.500 7v10M4.500 7v10') + p('M7 7.500h6.500v-4l8 8.500-8 8.500v-4h-6.500z'),
  notched: p('M2.500 8.500h10.500v-4l8.500 7.500-8.500 7.500v-4h-10.500l4-3.500z'),
  home: p('M2.500 4.500h12l7 7.500-7 7.500h-12z'),
  chevron: p('M2.500 4.500h11l8 7.500-8 7.500h-11l8-7.500z'),
  callRight: callR, callDown: turn(90, callR), callLeft: turn(180, callR), callUp: turn(270, callR),
  callLeftRight: p('M8 2.500h8v8h2v-2l3.500 3.500-3.500 3.500v-2h-2v8h-8v-8h-2v2l-3.500-3.500 3.500-3.500v2h2z'),
  callQuad: p('M12 2.500l3.500 4h-2v1.500h2.500v2.500h1.500v-2l4 3.500-4 3.500v-2h-1.500v2.500h-2.500v1.500h2l-3.500 4-3.500-4h2v-1.500h-2.500v-2.500h-1.500v2l-4-3.500 4-3.500v2h1.500v-2.500h2.500v-1.500h-2z'),
  mathPlus, times: turn(45, mathPlus),
  minus: p('M2.500 9.500h19v5h-19z'),
  divide: p('M2.500 9.500h19v4.500h-19z') + circle(1.7, 12, 4.5) + circle(1.7, 12, 19),
  equal: p('M2.500 5h19v5h-19zM2.500 13.500h19v5h-19z'),
  notEqual: p('M2.500 5h19v5h-19zM2.500 13.500h19v5h-19z') + p('M17 2.500h4.500l-14.500 19h-4.500z'),
  decision: p('M12 6l9.500 6-9.500 6-9.500-6z'),
  data: p('M8 3.500h13.500l-5.500 17h-13.500z'),
  predefined: square + line('M6.500 2.500v19M17.500 2.500v19'),
  internal: square + line('M6.500 2.500v19M2.500 6.500h19'),
  document: p('M2.500 3.500h19v14.500c-7-1-9 4-13 3.500-3 0-4-1-6-2.500z'),
  documents: p('M8 2.500h13.500v11h-13.500z') + p('M5.500 5h13.500v11h-13.500z') + p('M2.500 8h13.500v10c-5 0-6 3-9 3-2 0-3-1-4.500-2z'),
  terminator: '<rect x="2.500" y="6" width="19" height="12" rx="6"/>',
  prep: p('M7 6h10l4.500 6-4.500 6h-10l-4.500-6z'),
  manualInput: p('M2.500 9l19-4.500v15h-19z'),
  manualOp: p('M2.500 4.500h19l-5 15.500h-9z'),
  offPage: p('M5 2.500h14v13l-7 6-7-6z'),
  card: p('M8.500 2.500h13v19h-19v-13z'),
  tape: p('M2.500 5.500c4 3 8 1 10-1s6-2 9-1v15c-4-2-7-1-9 1s-6 2-10 .5z'),
  junction: circle(9.5) + line('M5.300 5.300l13.400 13.400M18.700 5.300l-13.400 13.400'),
  or: circle(9.5) + line('M2.500 12h19M12 2.500v19'),
  collate: p('M5.500 3h13l-13 18h13z'),
  sort: p('M12 3l7 9-7 9-7-9zM5 12h14'),
  extract: p('M12 5l7 15h-14z'),
  merge: p('M2.500 3.500h19l-9.500 17z'),
  stored: p('M8 4.500h13.500c-4 3-4 12 0 15h-13.500c-7 0-7-15 0-15z'),
  delay: p('M2.500 2.500h9.500a9.500 9.500 0 0 1 0 19h-9.500z'),
  sequential: p('M21.500 21.500h-9.500a9.500 9.500 0 1 1 7.500-3.500h2z'),
  disk: p('M2.500 8v8c0 5 19 5 19 0v-8c0-4-19-4-19 0c0 4 19 4 19 0'),
  direct: p('M8 2.500h8c4 0 4 19 0 19h-8c-4 0-4-19 0-19zM16 2.500c-4 0-4 19 0 19'),
  display: p('M8 2.500h5a8.500 9.500 0 0 1 0 19h-5l-5.500-9.500z')
};

document.querySelectorAll('[data-shapes]').forEach(grid => {
  grid.innerHTML = grid.dataset.shapes.split(' ')
    .map(name => `<button aria-label="${name}"><svg width="24" height="24">${shapes[name]}</svg></button>`)
    .join('');
});
```
